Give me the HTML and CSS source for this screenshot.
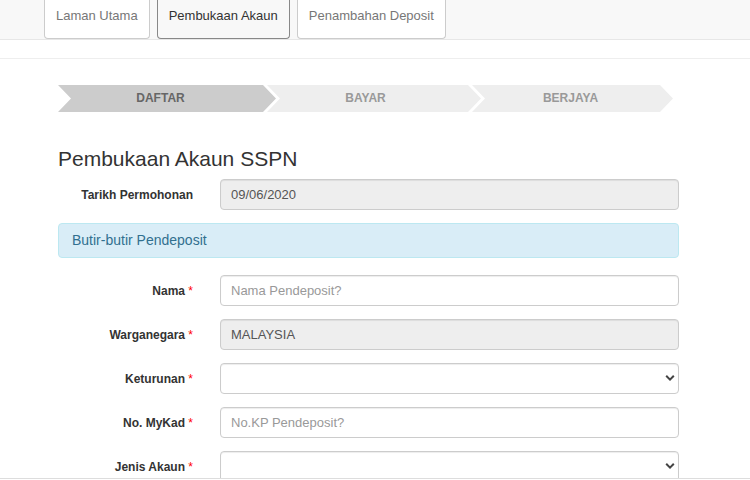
FILE: index.html
```
<!DOCTYPE html>
<html lang="ms">
<head>
    <meta charset="UTF-8">
    <meta name="viewport" content="width=device-width, initial-scale=1.0">
    <title>Pembukaan Akaun SSPN</title>
    <link rel="stylesheet" href="styles.css">
</head>
<body>
<nav class="navbar">
    <a class="tab" href="#utama">Laman Utama</a>
    <a class="tab active" href="#akaun">Pembukaan Akaun</a>
    <a class="tab" href="#deposit">Penambahan Deposit</a>
</nav>
<main class="content">
    <ol class="steps">
        <li class="step current">DAFTAR</li>
        <li class="step">BAYAR</li>
        <li class="step">BERJAYA</li>
    </ol>
    <h1>Pembukaan Akaun SSPN</h1>
    <form class="form">
        <div class="row">
            <label for="tarikh">Tarikh Permohonan</label>
            <input type="text" id="tarikh" value="09/06/2020" readonly>
        </div>
        <h2 class="section">Butir-butir Pendeposit</h2>
        <div class="row">
            <label for="nama">Nama <span class="required">*</span></label>
            <input type="text" id="nama" placeholder="Nama Pendeposit?">
        </div>
        <div class="row">
            <label for="negara">Warganegara <span class="required">*</span></label>
            <input type="text" id="negara" value="MALAYSIA" readonly>
        </div>
        <div class="row">
            <label for="keturunan">Keturunan <span class="required">*</span></label>
            <div class="select">
                <select id="keturunan"><option></option></select>
                <svg viewBox="0 0 10 6"><path d="M1.2 0.8 L5 4.6 L8.8 0.8"/></svg>
            </div>
        </div>
        <div class="row">
            <label for="mykad">No. MyKad <span class="required">*</span></label>
            <input type="text" id="mykad" placeholder="No.KP Pendeposit?">
        </div>
        <div class="row">
            <label for="jenis">Jenis Akaun <span class="required">*</span></label>
            <div class="select">
                <select id="jenis"><option></option></select>
                <svg viewBox="0 0 10 6"><path d="M1.2 0.8 L5 4.6 L8.8 0.8"/></svg>
            </div>
        </div>
    </form>
</main>
<footer class="footer"></footer>
</body>
</html>
```

FILE: styles.css
```
* {
    box-sizing: border-box;
}
body {
    margin: 0;
    height: 100vh;
    display: flex;
    flex-direction: column;
    overflow: hidden;
    background-color: #fff;
    color: #333;
    font-family: "Liberation Sans", Arial, sans-serif;
    font-size: 13px;
    line-height: 18px;
}
.navbar {
    display: flex;
    gap: 7px;
    padding-left: 44px;
    background-color: #f8f8f8;
    border-bottom: 1px solid #e7e7e7;
}
.tab {
    padding: 7px 11px 13px;
    border: 1px solid #ccc;
    border-top: none;
    border-radius: 0 0 4px 4px;
    background-color: #fff;
    color: #777;
    text-decoration: none;
}
.tab.active {
    background-color: #f8f8f8;
    border-color: #888;
    color: #333;
}
.content {
    flex: 1;
    min-height: 0;
    overflow: hidden;
    margin-top: 18px;
    padding: 26px 71px 0 58px;
    border-top: 1px solid #eee;
}
.steps {
    display: grid;
    grid-template-columns: repeat(3, 1fr);
    margin: 0 6px 0 0;
    padding: 0;
    list-style: none;
}
.step {
    margin: 0 -13px 0 4px;
    padding-right: 17px;
    background-color: #eee;
    color: #999;
    font-size: 12px;
    font-weight: bold;
    line-height: 27px;
    text-align: center;
    clip-path: polygon(0 0, calc(100% - 13px) 0, 100% 50%, calc(100% - 13px) 100%, 0 100%, 13px 50%);
}
.step.current {
    margin-left: 0;
    padding-right: 13px;
    background-color: #ccc;
    color: #666;
}
.step:last-child {
    margin-right: 0;
    padding-right: 4px;
}
h1 {
    margin: 34px 0 7px;
    font-size: 21px;
    font-weight: normal;
    line-height: 26px;
}
.form {
    display: flex;
    flex-direction: column;
    gap: 13px;
}
.row {
    display: grid;
    grid-template-columns: 135px 1fr;
    column-gap: 27px;
    align-items: center;
}
.row label {
    font-size: 12px;
    font-weight: bold;
    text-align: right;
}
.required {
    color: #f00;
    font-weight: normal;
}
.row input,
.row select {
    display: block;
    width: 100%;
    height: 31px;
    padding: 0 10px;
    border: 1px solid #ccc;
    border-radius: 4px;
    background-color: #fff;
    box-shadow: inset 0 1px 1px rgba(0, 0, 0, 0.075);
    color: #555;
    font-family: inherit;
    font-size: 13px;
}
.row input[readonly] {
    background-color: #eee;
}
.row input::placeholder {
    color: #999;
}
.select {
    position: relative;
}
.row select {
    appearance: none;
}
.select svg {
    position: absolute;
    top: 12px;
    right: 4px;
    width: 10px;
    height: 6px;
    fill: none;
    stroke: #444;
    stroke-width: 2;
    pointer-events: none;
}
.section {
    margin: 0 0 4px;
    padding: 8px 13px;
    border: 1px solid #bce8f1;
    border-radius: 4px;
    background-color: #d9edf7;
    color: #31708f;
    font-size: 14px;
    font-weight: normal;
    line-height: 17px;
}
.footer {
    height: 2px;
    border-top: 1px solid #ddd;
}
```
